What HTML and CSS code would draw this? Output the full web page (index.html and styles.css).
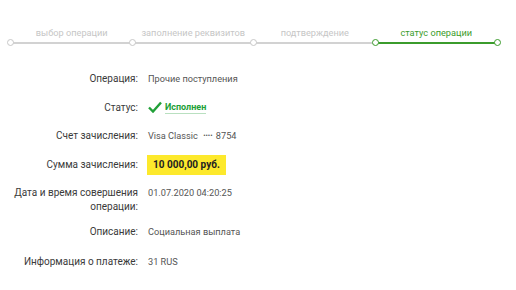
FILE: index.html
```html
<!DOCTYPE html>
<html lang="ru">
<head>
  <meta charset="UTF-8" />
  <meta name="viewport" content="width=device-width, initial-scale=1.0"/>
  <title>Статус операции</title>
  <link rel="stylesheet" href="styles.css">
</head>
<body>

<div class="steps">
  <div class="step done">
    <div class="step-label">выбор операции</div>
    <div class="step-line"></div>
  </div>
  <div class="step done">
    <div class="step-label">заполнение реквизитов</div>
    <div class="step-line"></div>
  </div>
  <div class="step done">
    <div class="step-label">подтверждение</div>
    <div class="step-line"></div>
  </div>
  <div class="step active">
    <div class="step-label">статус операции</div>
    <div class="step-line"></div>
  </div>
</div>

<div class="details">
  <div class="row">
    <div class="label">Операция:</div>
    <div class="value">Прочие поступления</div>
  </div>
  <div class="row">
    <div class="label">Статус:</div>
    <div class="value status">
      <svg class="check" width="14" height="12" viewBox="0 0 14 12">
        <path d="M1 6.5 L5 10.5 L13 1.5" fill="none" stroke="#21a038" stroke-width="2.4"/>
      </svg>
      <span class="status-text">Исполнен</span>
    </div>
  </div>
  <div class="row">
    <div class="label">Счет зачисления:</div>
    <div class="value">Visa Classic <span class="dots">••••</span> 8754</div>
  </div>
  <div class="row row-amount">
    <div class="label">Сумма зачисления:</div>
    <div class="value"><span class="amount">10 000,00 руб.</span></div>
  </div>
  <div class="row row-date">
    <div class="label">Дата и время совершения операции:</div>
    <div class="value">01.07.2020 04:20:25</div>
  </div>
  <div class="row row-desc">
    <div class="label">Описание:</div>
    <div class="value">Социальная выплата</div>
  </div>
  <div class="row">
    <div class="label">Информация о платеже:</div>
    <div class="value">31 RUS</div>
  </div>
</div>

</body>
</html>
```

FILE: styles.css
```css
body {
  margin: 0;
  font-family: Roboto, 'Liberation Sans', sans-serif;
  background-color: #ffffff;
  color: #333333;
}

.steps {
  display: flex;
  width: 486px;
  margin-left: 11px;
  padding-top: 27px;
}

.step {
  flex: 1;
}

.step-label {
  font-size: 9.2px;
  line-height: 12px;
  text-align: center;
  color: #c6c6c6;
  margin-bottom: 3px;
}

.step-line {
  position: relative;
  height: 2px;
  background-color: #d2d2d2;
}

.step-line::before {
  content: "";
  position: absolute;
  left: -4px;
  top: -3px;
  width: 5px;
  height: 5px;
  border: 1.5px solid #c8c8c8;
  border-radius: 50%;
  background-color: #ffffff;
}

.step.active .step-label {
  color: #3b9c2c;
}

.step.active .step-line {
  background-color: #3b9c2c;
}

.step.active .step-line::before,
.step.active .step-line::after {
  border-color: #3b9c2c;
}

.step.active .step-line::after {
  content: "";
  position: absolute;
  right: -4px;
  top: -3px;
  width: 5px;
  height: 5px;
  border: 1.5px solid #3b9c2c;
  border-radius: 50%;
  background-color: #ffffff;
}

.details {
  margin-top: 28px;
}

.row {
  display: flex;
  align-items: flex-start;
  margin-bottom: 14.5px;
}

.label {
  width: 138px;
  padding-left: 8px;
  box-sizing: border-box;
  text-align: right;
  font-size: 10px;
  line-height: 14px;
  color: #3a3a3a;
}

.value {
  margin-left: 10px;
  font-size: 9.2px;
  line-height: 14px;
  color: #555555;
}

.status {
  display: flex;
  align-items: center;
}

.check {
  margin-right: 3px;
}

.status-text {
  font-weight: bold;
  font-size: 9px;
  color: #21a038;
  border-bottom: 1px solid #b9e0c0;
  line-height: 12px;
}

.dots {
  margin-left: 3px;
  margin-right: 1px;
  font-size: 7px;
  vertical-align: 1px;
}

.row-amount {
  align-items: center;
  margin-top: -3px;
  margin-bottom: 11.5px;
}

.row-date {
  margin-bottom: 11px;
}

.row-desc {
  margin-bottom: 16px;
}

.amount {
  display: inline-block;
  background-color: #fde92c;
  color: #222222;
  font-weight: bold;
  font-size: 10px;
  line-height: 14px;
  padding: 3px 6px;
  margin-left: -1px;
}
```
